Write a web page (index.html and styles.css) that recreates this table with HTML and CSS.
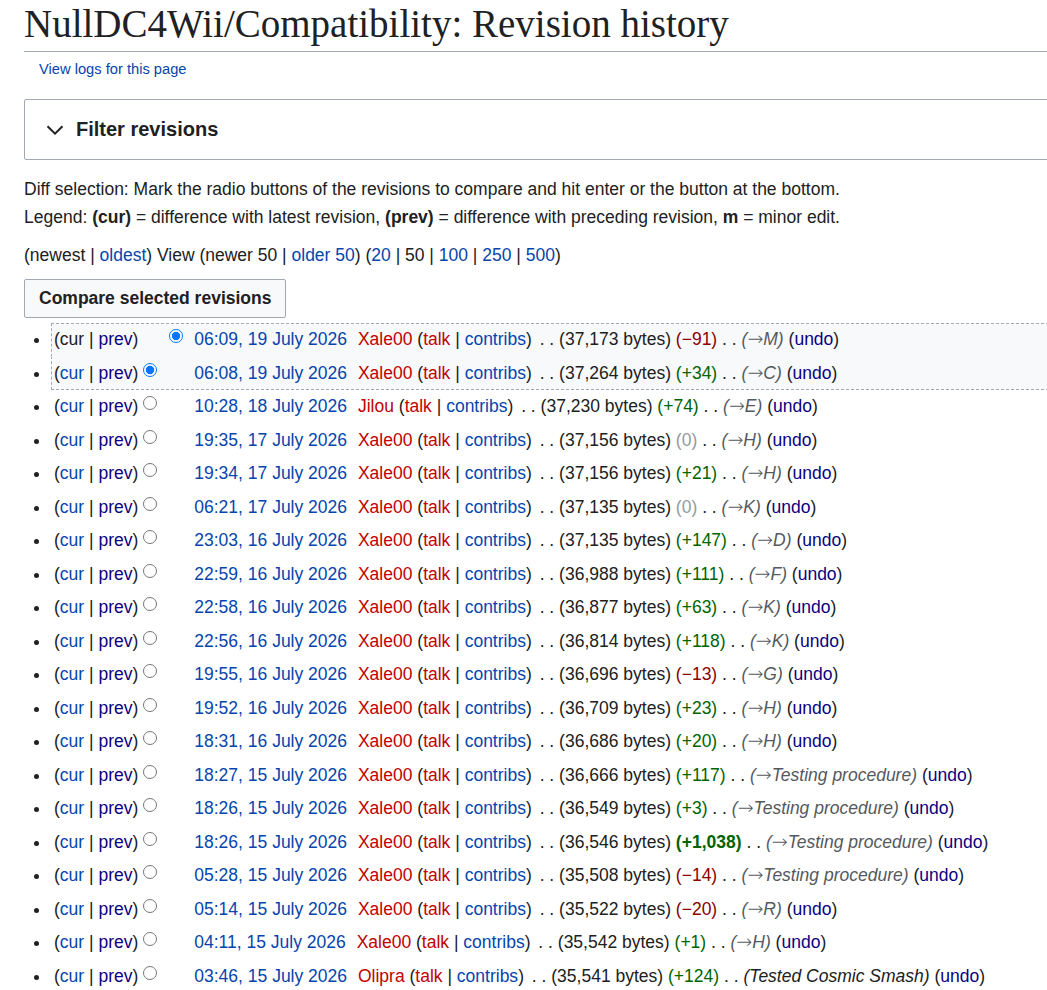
FILE: index.html
```html
<!DOCTYPE html>
<html lang="en">
<head>
<meta charset="utf-8">
<title>NullDC4Wii/Compatibility: Revision history</title>
<link rel="stylesheet" href="styles.css">
</head>
<body>
<div class="content">
  <h1 class="title">NullDC4Wii/Compatibility: Revision history</h1>
  <div class="subtitle"><a href="#">View logs for this page</a></div>

  <div class="filter">
    <svg class="chev" width="18" height="10" viewBox="0 0 18 10"><path d="M1.5 1.2 9 8.6 16.5 1.2" fill="none" stroke="#202122" stroke-width="2"/></svg>
    <span class="filter-label">Filter revisions</span>
  </div>

  <div class="legend-line">Diff selection: Mark the radio buttons of the revisions to compare and hit enter or the button at the bottom.</div>
  <div class="legend-line">Legend: <b>(cur)</b> = difference with latest revision, <b>(prev)</b> = difference with preceding revision, <b>m</b> = minor edit.</div>

  <div class="nav">(newest | <a href="#">oldest</a>) View (newer 50 | <a href="#">older 50</a>) (<a href="#">20</a> | 50 | <a href="#">100</a> | <a href="#">250</a> | <a href="#">500</a>)</div>

  <button class="compare" type="button">Compare selected revisions</button>

  <ul class="history">
    <li class="sel"><span class="links">(cur | <a href="#" class="v">prev</a>)</span><input type="radio" name="oldid" class="r1 hide"><input type="radio" name="diff" class="r2" checked><a href="#" class="date">06:09, 19 July 2026</a> <span class="user"><a href="#" class="new">Xale00</a> <span class="tools">(<a href="#" class="new">talk</a> | <a href="#">contribs</a>)</span></span> <span class="sep">. .</span> <span>(37,173 bytes)</span> <span class="neg">(−91)</span> <span class="sep">. .</span> <span class="cmt auto">(<span class="arr">→</span>M)</span> <span class="undo">(<a href="#" class="v">undo</a>)</span></li>
    <li class="sel"><span class="links">(<a href="#">cur</a> | <a href="#" class="v">prev</a>)</span><input type="radio" name="oldid" class="r1" checked><input type="radio" name="diff" class="r2 hide"><a href="#" class="date">06:08, 19 July 2026</a> <span class="user"><a href="#" class="new">Xale00</a> <span class="tools">(<a href="#" class="new">talk</a> | <a href="#">contribs</a>)</span></span> <span class="sep">. .</span> <span>(37,264 bytes)</span> <span class="pos">(+34)</span> <span class="sep">. .</span> <span class="cmt auto">(<span class="arr">→</span>C)</span> <span class="undo">(<a href="#" class="v">undo</a>)</span></li>
    <li><span class="links">(<a href="#">cur</a> | <a href="#" class="v">prev</a>)</span><input type="radio" name="oldid" class="r1"><input type="radio" name="diff" class="r2 hide"><a href="#" class="date">10:28, 18 July 2026</a> <span class="user"><a href="#" class="new">Jilou</a> <span class="tools">(<a href="#" class="new">talk</a> | <a href="#">contribs</a>)</span></span> <span class="sep">. .</span> <span>(37,230 bytes)</span> <span class="pos">(+74)</span> <span class="sep">. .</span> <span class="cmt auto">(<span class="arr">→</span>E)</span> <span class="undo">(<a href="#" class="v">undo</a>)</span></li>
    <li><span class="links">(<a href="#">cur</a> | <a href="#" class="v">prev</a>)</span><input type="radio" name="oldid" class="r1"><input type="radio" name="diff" class="r2 hide"><a href="#" class="date">19:35, 17 July 2026</a> <span class="user"><a href="#" class="new">Xale00</a> <span class="tools">(<a href="#" class="new">talk</a> | <a href="#">contribs</a>)</span></span> <span class="sep">. .</span> <span>(37,156 bytes)</span> <span class="null">(0)</span> <span class="sep">. .</span> <span class="cmt auto">(<span class="arr">→</span>H)</span> <span class="undo">(<a href="#" class="v">undo</a>)</span></li>
    <li><span class="links">(<a href="#">cur</a> | <a href="#" class="v">prev</a>)</span><input type="radio" name="oldid" class="r1"><input type="radio" name="diff" class="r2 hide"><a href="#" class="date">19:34, 17 July 2026</a> <span class="user"><a href="#" class="new">Xale00</a> <span class="tools">(<a href="#" class="new">talk</a> | <a href="#">contribs</a>)</span></span> <span class="sep">. .</span> <span>(37,156 bytes)</span> <span class="pos">(+21)</span> <span class="sep">. .</span> <span class="cmt auto">(<span class="arr">→</span>H)</span> <span class="undo">(<a href="#" class="v">undo</a>)</span></li>
    <li><span class="links">(<a href="#">cur</a> | <a href="#" class="v">prev</a>)</span><input type="radio" name="oldid" class="r1"><input type="radio" name="diff" class="r2 hide"><a href="#" class="date">06:21, 17 July 2026</a> <span class="user"><a href="#" class="new">Xale00</a> <span class="tools">(<a href="#" class="new">talk</a> | <a href="#">contribs</a>)</span></span> <span class="sep">. .</span> <span>(37,135 bytes)</span> <span class="null">(0)</span> <span class="sep">. .</span> <span class="cmt auto">(<span class="arr">→</span>K)</span> <span class="undo">(<a href="#" class="v">undo</a>)</span></li>
    <li><span class="links">(<a href="#">cur</a> | <a href="#" class="v">prev</a>)</span><input type="radio" name="oldid" class="r1"><input type="radio" name="diff" class="r2 hide"><a href="#" class="date">23:03, 16 July 2026</a> <span class="user"><a href="#" class="new">Xale00</a> <span class="tools">(<a href="#" class="new">talk</a> | <a href="#">contribs</a>)</span></span> <span class="sep">. .</span> <span>(37,135 bytes)</span> <span class="pos">(+147)</span> <span class="sep">. .</span> <span class="cmt auto">(<span class="arr">→</span>D)</span> <span class="undo">(<a href="#" class="v">undo</a>)</span></li>
    <li><span class="links">(<a href="#">cur</a> | <a href="#" class="v">prev</a>)</span><input type="radio" name="oldid" class="r1"><input type="radio" name="diff" class="r2 hide"><a href="#" class="date">22:59, 16 July 2026</a> <span class="user"><a href="#" class="new">Xale00</a> <span class="tools">(<a href="#" class="new">talk</a> | <a href="#">contribs</a>)</span></span> <span class="sep">. .</span> <span>(36,988 bytes)</span> <span class="pos">(+111)</span> <span class="sep">. .</span> <span class="cmt auto">(<span class="arr">→</span>F)</span> <span class="undo">(<a href="#" class="v">undo</a>)</span></li>
    <li><span class="links">(<a href="#">cur</a> | <a href="#" class="v">prev</a>)</span><input type="radio" name="oldid" class="r1"><input type="radio" name="diff" class="r2 hide"><a href="#" class="date">22:58, 16 July 2026</a> <span class="user"><a href="#" class="new">Xale00</a> <span class="tools">(<a href="#" class="new">talk</a> | <a href="#">contribs</a>)</span></span> <span class="sep">. .</span> <span>(36,877 bytes)</span> <span class="pos">(+63)</span> <span class="sep">. .</span> <span class="cmt auto">(<span class="arr">→</span>K)</span> <span class="undo">(<a href="#" class="v">undo</a>)</span></li>
    <li><span class="links">(<a href="#">cur</a> | <a href="#" class="v">prev</a>)</span><input type="radio" name="oldid" class="r1"><input type="radio" name="diff" class="r2 hide"><a href="#" class="date">22:56, 16 July 2026</a> <span class="user"><a href="#" class="new">Xale00</a> <span class="tools">(<a href="#" class="new">talk</a> | <a href="#">contribs</a>)</span></span> <span class="sep">. .</span> <span>(36,814 bytes)</span> <span class="pos">(+118)</span> <span class="sep">. .</span> <span class="cmt auto">(<span class="arr">→</span>K)</span> <span class="undo">(<a href="#" class="v">undo</a>)</span></li>
    <li><span class="links">(<a href="#">cur</a> | <a href="#" class="v">prev</a>)</span><input type="radio" name="oldid" class="r1"><input type="radio" name="diff" class="r2 hide"><a href="#" class="date">19:55, 16 July 2026</a> <span class="user"><a href="#" class="new">Xale00</a> <span class="tools">(<a href="#" class="new">talk</a> | <a href="#">contribs</a>)</span></span> <span class="sep">. .</span> <span>(36,696 bytes)</span> <span class="neg">(−13)</span> <span class="sep">. .</span> <span class="cmt auto">(<span class="arr">→</span>G)</span> <span class="undo">(<a href="#" class="v">undo</a>)</span></li>
    <li><span class="links">(<a href="#">cur</a> | <a href="#" class="v">prev</a>)</span><input type="radio" name="oldid" class="r1"><input type="radio" name="diff" class="r2 hide"><a href="#" class="date">19:52, 16 July 2026</a> <span class="user"><a href="#" class="new">Xale00</a> <span class="tools">(<a href="#" class="new">talk</a> | <a href="#">contribs</a>)</span></span> <span class="sep">. .</span> <span>(36,709 bytes)</span> <span class="pos">(+23)</span> <span class="sep">. .</span> <span class="cmt auto">(<span class="arr">→</span>H)</span> <span class="undo">(<a href="#" class="v">undo</a>)</span></li>
    <li><span class="links">(<a href="#">cur</a> | <a href="#" class="v">prev</a>)</span><input type="radio" name="oldid" class="r1"><input type="radio" name="diff" class="r2 hide"><a href="#" class="date">18:31, 16 July 2026</a> <span class="user"><a href="#" class="new">Xale00</a> <span class="tools">(<a href="#" class="new">talk</a> | <a href="#">contribs</a>)</span></span> <span class="sep">. .</span> <span>(36,686 bytes)</span> <span class="pos">(+20)</span> <span class="sep">. .</span> <span class="cmt auto">(<span class="arr">→</span>H)</span> <span class="undo">(<a href="#" class="v">undo</a>)</span></li>
    <li><span class="links">(<a href="#">cur</a> | <a href="#" class="v">prev</a>)</span><input type="radio" name="oldid" class="r1"><input type="radio" name="diff" class="r2 hide"><a href="#" class="date">18:27, 15 July 2026</a> <span class="user"><a href="#" class="new">Xale00</a> <span class="tools">(<a href="#" class="new">talk</a> | <a href="#">contribs</a>)</span></span> <span class="sep">. .</span> <span>(36,666 bytes)</span> <span class="pos">(+117)</span> <span class="sep">. .</span> <span class="cmt auto">(<span class="arr">→</span>Testing procedure)</span> <span class="undo">(<a href="#" class="v">undo</a>)</span></li>
    <li><span class="links">(<a href="#">cur</a> | <a href="#" class="v">prev</a>)</span><input type="radio" name="oldid" class="r1"><input type="radio" name="diff" class="r2 hide"><a href="#" class="date">18:26, 15 July 2026</a> <span class="user"><a href="#" class="new">Xale00</a> <span class="tools">(<a href="#" class="new">talk</a> | <a href="#">contribs</a>)</span></span> <span class="sep">. .</span> <span>(36,549 bytes)</span> <span class="pos">(+3)</span> <span class="sep">. .</span> <span class="cmt auto">(<span class="arr">→</span>Testing procedure)</span> <span class="undo">(<a href="#" class="v">undo</a>)</span></li>
    <li><span class="links">(<a href="#">cur</a> | <a href="#" class="v">prev</a>)</span><input type="radio" name="oldid" class="r1"><input type="radio" name="diff" class="r2 hide"><a href="#" class="date">18:26, 15 July 2026</a> <span class="user"><a href="#" class="new">Xale00</a> <span class="tools">(<a href="#" class="new">talk</a> | <a href="#">contribs</a>)</span></span> <span class="sep">. .</span> <span>(36,546 bytes)</span> <strong class="pos">(+1,038)</strong> <span class="sep">. .</span> <span class="cmt auto">(<span class="arr">→</span>Testing procedure)</span> <span class="undo">(<a href="#" class="v">undo</a>)</span></li>
    <li><span class="links">(<a href="#">cur</a> | <a href="#" class="v">prev</a>)</span><input type="radio" name="oldid" class="r1"><input type="radio" name="diff" class="r2 hide"><a href="#" class="date">05:28, 15 July 2026</a> <span class="user"><a href="#" class="new">Xale00</a> <span class="tools">(<a href="#" class="new">talk</a> | <a href="#">contribs</a>)</span></span> <span class="sep">. .</span> <span>(35,508 bytes)</span> <span class="neg">(−14)</span> <span class="sep">. .</span> <span class="cmt auto">(<span class="arr">→</span>Testing procedure)</span> <span class="undo">(<a href="#" class="v">undo</a>)</span></li>
    <li><span class="links">(<a href="#">cur</a> | <a href="#" class="v">prev</a>)</span><input type="radio" name="oldid" class="r1"><input type="radio" name="diff" class="r2 hide"><a href="#" class="date">05:14, 15 July 2026</a> <span class="user"><a href="#" class="new">Xale00</a> <span class="tools">(<a href="#" class="new">talk</a> | <a href="#">contribs</a>)</span></span> <span class="sep">. .</span> <span>(35,522 bytes)</span> <span class="neg">(−20)</span> <span class="sep">. .</span> <span class="cmt auto">(<span class="arr">→</span>R)</span> <span class="undo">(<a href="#" class="v">undo</a>)</span></li>
    <li><span class="links">(<a href="#">cur</a> | <a href="#" class="v">prev</a>)</span><input type="radio" name="oldid" class="r1"><input type="radio" name="diff" class="r2 hide"><a href="#" class="date">04:11, 15 July 2026</a> <span class="user"><a href="#" class="new">Xale00</a> <span class="tools">(<a href="#" class="new">talk</a> | <a href="#">contribs</a>)</span></span> <span class="sep">. .</span> <span>(35,542 bytes)</span> <span class="pos">(+1)</span> <span class="sep">. .</span> <span class="cmt auto">(<span class="arr">→</span>H)</span> <span class="undo">(<a href="#" class="v">undo</a>)</span></li>
    <li><span class="links">(<a href="#">cur</a> | <a href="#" class="v">prev</a>)</span><input type="radio" name="oldid" class="r1"><input type="radio" name="diff" class="r2 hide"><a href="#" class="date">03:46, 15 July 2026</a> <span class="user"><a href="#" class="new">Olipra</a> <span class="tools">(<a href="#" class="new">talk</a> | <a href="#">contribs</a>)</span></span> <span class="sep">. .</span> <span>(35,541 bytes)</span> <span class="pos">(+124)</span> <span class="sep">. .</span> <span class="cmt">(Tested Cosmic Smash)</span> <span class="undo">(<a href="#" class="v">undo</a>)</span></li>
  </ul>
</div>
</body>
</html>
```

FILE: styles.css
```css
html, body {
  overflow: hidden;
}

body {
  margin: 0;
  font-family: "Liberation Sans", Arial, sans-serif;
  font-size: 17.5px;
  color: #202122;
  background: #fff;
}

a {
  color: #0645ad;
  text-decoration: none;
}

a.v {
  color: #0b0080;
}

a.new {
  color: #c20000;
}

.content {
  width: 1060px;
  padding-left: 24px;
}

.title {
  margin: 0;
  font-family: "Liberation Serif", "Times New Roman", serif;
  font-weight: normal;
  font-size: 39px;
  line-height: 48px;
  padding-bottom: 3px;
  border-bottom: 1px solid #a2a9b1;
}

.subtitle {
  margin: 7px 0 0 15px;
  font-size: 14.7px;
  line-height: 20px;
}

.filter {
  margin-top: 20px;
  height: 59px;
  border: 1px solid #a2a9b1;
  border-radius: 2px;
  display: flex;
  align-items: center;
  padding-left: 21px;
}

.chev {
  display: block;
  margin-right: 12px;
}

.filter-label {
  font-weight: bold;
  font-size: 20px;
}

.legend-line {
  line-height: 28px;
}

.filter + .legend-line {
  margin-top: 15px;
}

.nav {
  margin-top: 13px;
  line-height: 22px;
}

.compare {
  display: block;
  margin-top: 13px;
  height: 39px;
  padding: 0 14px;
  font-family: "Liberation Sans", Arial, sans-serif;
  font-size: 17.5px;
  font-weight: bold;
  color: #202122;
  background: #f8f9fa;
  border: 1px solid #a2a9b1;
  border-radius: 2px;
}

.history {
  margin: 5px 0 0;
  padding: 0 0 0 27px;
  list-style: disc;
}

.history li {
  line-height: 25.5px;
  padding: 3px 0 3px 2px;
  border: 1px solid transparent;
  border-right: none;
}

.history li.sel {
  background: #f8f9fa;
  border: 1px dashed #a2a9b1;
  border-right: none;
}

.history li.sel + li.sel {
  border-top-color: transparent;
  margin-top: -1px;
  padding-top: 4px;
}

.history input {
  width: 14px;
  height: 14px;
  margin: 0;
  vertical-align: 2px;
}

.history input.r1 {
  margin-left: 5px;
}

.history input.r2 {
  margin-left: 12px;
}

.history input.hide {
  visibility: hidden;
}

.history .date {
  margin-left: 11px;
}

.user {
  margin-left: 6px;
  margin-right: 3px;
}

.neg {
  color: #8b0000;
}

.pos {
  color: #006400;
}

.null {
  color: #939aa2;
}

.cmt {
  font-style: italic;
}

.cmt.auto {
  color: #54595d;
}

.arr {
  font-family: "DejaVu Sans", sans-serif;
  font-size: 19px;
  line-height: 0;
  font-weight: 200;
  font-style: normal;
}
```
